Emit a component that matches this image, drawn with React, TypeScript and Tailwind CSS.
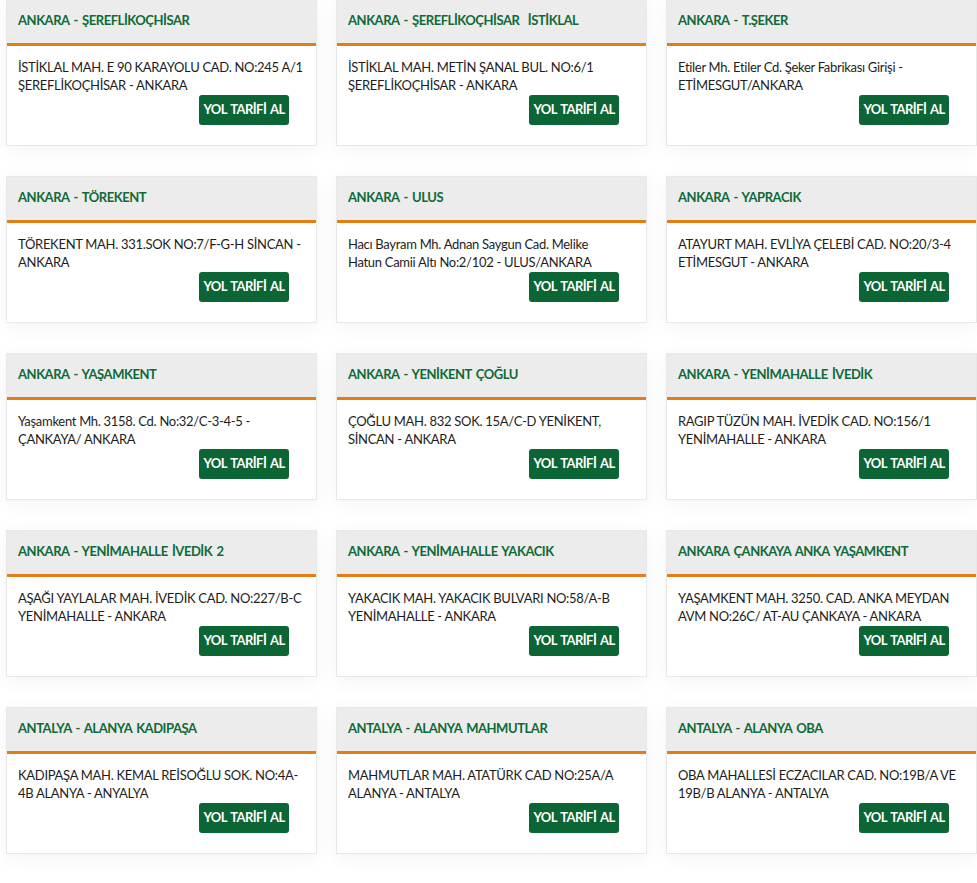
import React from "react";

interface Store {
  title: string;
  lines: [string, string];
}

// address lines split where the original page breaks them
const stores: Store[] = [
  { title: "ANKARA - ŞEREFLİKOÇHİSAR", lines: ["İSTİKLAL MAH. E 90 KARAYOLU CAD. NO:245 A/1", "ŞEREFLİKOÇHİSAR - ANKARA"] },
  { title: "ANKARA - ŞEREFLİKOÇHİSAR  İSTİKLAL", lines: ["İSTİKLAL MAH. METİN ŞANAL BUL. NO:6/1", "ŞEREFLİKOÇHİSAR - ANKARA"] },
  { title: "ANKARA - T.ŞEKER", lines: ["Etiler Mh. Etiler Cd. Şeker Fabrikası Girişi -", "ETİMESGUT/ANKARA"] },
  { title: "ANKARA - TÖREKENT", lines: ["TÖREKENT MAH. 331.SOK NO:7/F-G-H SİNCAN -", "ANKARA"] },
  { title: "ANKARA - ULUS", lines: ["Hacı Bayram Mh. Adnan Saygun Cad. Melike", "Hatun Camii Altı No:2/102 - ULUS/ANKARA"] },
  { title: "ANKARA - YAPRACIK", lines: ["ATAYURT MAH. EVLİYA ÇELEBİ CAD. NO:20/3-4", "ETİMESGUT - ANKARA"] },
  { title: "ANKARA - YAŞAMKENT", lines: ["Yaşamkent Mh. 3158. Cd. No:32/C-3-4-5 -", "ÇANKAYA/ ANKARA"] },
  { title: "ANKARA - YENİKENT ÇOĞLU", lines: ["ÇOĞLU MAH. 832 SOK. 15A/C-D YENİKENT,", "SİNCAN - ANKARA"] },
  { title: "ANKARA - YENİMAHALLE İVEDİK", lines: ["RAGIP TÜZÜN MAH. İVEDİK CAD. NO:156/1", "YENİMAHALLE - ANKARA"] },
  { title: "ANKARA - YENİMAHALLE İVEDİK 2", lines: ["AŞAĞI YAYLALAR MAH. İVEDİK CAD. NO:227/B-C", "YENİMAHALLE - ANKARA"] },
  { title: "ANKARA - YENİMAHALLE YAKACIK", lines: ["YAKACIK MAH. YAKACIK BULVARI NO:58/A-B", "YENİMAHALLE - ANKARA"] },
  { title: "ANKARA ÇANKAYA ANKA YAŞAMKENT", lines: ["YAŞAMKENT MAH. 3250. CAD. ANKA MEYDAN", "AVM NO:26C/ AT-AU ÇANKAYA - ANKARA"] },
  { title: "ANTALYA - ALANYA KADIPAŞA", lines: ["KADIPAŞA MAH. KEMAL REİSOĞLU SOK. NO:4A-", "4B ALANYA - ANYALYA"] },
  { title: "ANTALYA - ALANYA MAHMUTLAR", lines: ["MAHMUTLAR MAH. ATATÜRK CAD NO:25A/A", "ALANYA - ANTALYA"] },
  { title: "ANTALYA - ALANYA OBA", lines: ["OBA MAHALLESİ ECZACILAR CAD. NO:19B/A VE", "19B/B ALANYA - ANTALYA"] },
];

function StoreCard({ store }: { store: Store }) {
  return (
    <article className="flex h-[147px] flex-col border border-[#e8e8e8] bg-white shadow-[0_4px_18px_rgba(0,0,0,0.05)]">
      <header className="flex h-[46px] shrink-0 items-center border-b-[3px] border-[#e57e12] bg-[#ececec] px-[11px] pb-[1px]">
        <h3 className="whitespace-pre text-[13px] font-bold tracking-[-0.45px] text-[#0f6a37] [word-spacing:1.5px]">
          {store.title}
        </h3>
      </header>
      <div className="flex flex-1 flex-col px-[11px] pt-[12px]">
        <p className="whitespace-nowrap text-[13px] leading-[18px] tracking-[-0.3px] text-[#1d1d1d]">
          {store.lines[0]}
          <br />
          {store.lines[1]}
        </p>
        <div className="mt-[1px] flex justify-end pr-[16px]">
          <button
            type="button"
            className="h-[30px] w-[90px] rounded-[3px] bg-[#0b6534] text-[13px] font-bold tracking-[-0.55px] text-white [word-spacing:1.5px]"
          >
            YOL TARİFİ AL
          </button>
        </div>
      </div>
    </article>
  );
}

export default function App() {
  return (
    <div
      className="min-h-screen bg-white"
      style={{ fontFamily: "Lato, 'Noto Sans', sans-serif" }}
    >
      <div className="mt-[-1px] grid grid-cols-[311px_311px_311px] gap-x-[19px] gap-y-[30px] pl-[6px]">
        {stores.map((store) => (
          <StoreCard key={store.title} store={store} />
        ))}
      </div>
    </div>
  );
}
